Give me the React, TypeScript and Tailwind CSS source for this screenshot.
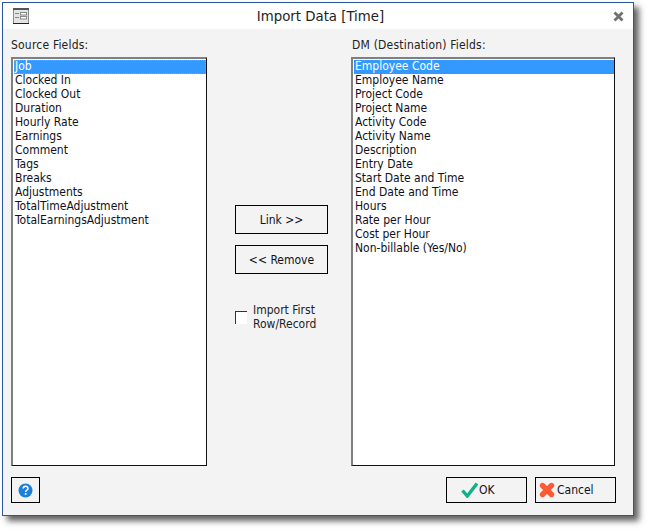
const sourceFields = [
  "Job",
  "Clocked In",
  "Clocked Out",
  "Duration",
  "Hourly Rate",
  "Earnings",
  "Comment",
  "Tags",
  "Breaks",
  "Adjustments",
  "TotalTimeAdjustment",
  "TotalEarningsAdjustment",
];

const destFields = [
  "Employee Code",
  "Employee Name",
  "Project Code",
  "Project Name",
  "Activity Code",
  "Activity Name",
  "Description",
  "Entry Date",
  "Start Date and Time",
  "End Date and Time",
  "Hours",
  "Rate per Hour",
  "Cost per Hour",
  "Non-billable (Yes/No)",
];

function ListBox({ items, width, focused }: { items: string[]; width: string; focused?: boolean }) {
  return (
    <div className={`${width} h-[409px] bg-white border border-[#101010] border-l-2 border-t-2 border-l-[#808080] border-t-[#808080] pl-px pt-px`}>
      {items.map((item, i) => (
        <div
          key={item}
          className={
            i === 0
              ? `h-[14px] leading-[13px] pl-[1px] bg-[#3399ff] text-white ${focused ? "outline outline-1 outline-dotted outline-offset-[-1px] outline-[#b89a70]" : ""}`
              : "h-[14px] leading-[13px] pl-[1px] text-[#101020]"
          }
        >
          {item}
        </div>
      ))}
    </div>
  );
}

export default function App() {
  return (
    <div className="w-[647px] h-[530px] bg-white pl-[2px] pt-[2px] font-['DejaVu_Sans_Condensed','DejaVu_Sans',sans-serif] text-[12px] text-[#101020]">
      <div className="w-[632px] h-[514px] border border-[#2b579a] bg-[#f3f3f3] flex flex-col shadow-[5px_5px_6px_rgba(60,60,60,0.8)]">
        <div className="h-[26px] bg-white flex items-center pl-[10px] pr-[9px] shrink-0">
          <svg width="16" height="16" viewBox="0 0 16 16">
            <rect x="0.5" y="0.5" width="15" height="15" fill="#e4e4e4" stroke="#8a8a8a" />
            <rect x="0" y="0" width="16" height="2" fill="#555" />
            <rect x="0" y="15" width="16" height="1" fill="#222" />
            <path d="M2 5.5h4M2 9.5h4" stroke="#888" />
            <rect x="7.5" y="4.5" width="6" height="2.5" fill="#fff" stroke="#888" />
            <rect x="7.5" y="8.5" width="6" height="2.5" fill="#fff" stroke="#888" />
          </svg>
          <div className="flex-1 text-center text-[14.8px] text-[#222] pr-[1px]">Import Data [Time]</div>
          <svg width="11" height="11" viewBox="0 0 11 11">
            <path d="M1.5 1.5l8 8M9.5 1.5l-8 8" stroke="#707070" strokeWidth="2.8" />
          </svg>
        </div>
        <div className="flex-1 flex flex-col pl-[8px] pr-[17px]">
          <div className="flex mt-[8px] h-[429px]">
            <div className="w-[196px]">
              <div className="h-[20px] leading-[16px] tracking-[0.2px] text-[#222]">Source Fields:</div>
              <ListBox items={sourceFields} width="w-[196px]" focused />
            </div>
            <div className="w-[145px] pl-[28px] pt-[168px]">
              <button className="block w-[93px] h-[29px] border border-black text-center">Link &gt;&gt;</button>
              <button className="block w-[93px] h-[29px] mt-[11px] border border-black text-center">&lt;&lt; Remove</button>
              <div className="flex items-center mt-[29px]">
                <div className="w-[12px] h-[13px] bg-white border-l border-t border-[#333] shrink-0" />
                <div className="ml-[6px] leading-[14px] text-[#222]">Import First Row/Record</div>
              </div>
            </div>
            <div className="w-[264px] -ml-px">
              <div className="h-[20px] pl-px leading-[16px] tracking-[0.2px] text-[#222]">DM (Destination) Fields:</div>
              <ListBox items={destFields} width="w-[264px]" />
            </div>
          </div>
          <div className="flex items-center mt-[11px]">
            <button className="w-[29px] h-[26px] border border-black flex items-center justify-center">
              <svg width="15" height="15" viewBox="0 0 15 15">
                <circle cx="7.5" cy="7.5" r="7" fill="#1e7fd6" />
                <path d="M5.2 5.6c0-3 4.8-3 4.8-.2 0 1.8-2.4 1.8-2.4 3.6" fill="none" stroke="#fff" strokeWidth="1.5" />
                <rect x="6.8" y="10" width="1.7" height="1.8" fill="#fff" />
              </svg>
            </button>
            <div className="flex-1" />
            <button className="w-[81px] h-[26px] border border-black flex items-center pl-[14px]">
              <svg width="18" height="16" viewBox="0 0 18 16">
                <path d="M1.5 8.5l4.8 5.5L16 1.5" fill="none" stroke="#10b08a" strokeWidth="3.4" />
              </svg>
              <span>OK</span>
            </button>
            <button className="w-[81px] h-[26px] ml-[8px] border border-black flex items-center pl-[3px]">
              <svg width="16" height="16" viewBox="0 0 16 16">
                <path d="M3.5 3.5l9 9M12.5 3.5l-9 9" stroke="#ff5a36" strokeWidth="5.4" strokeLinecap="round" />
              </svg>
              <span className="ml-[2px]">Cancel</span>
            </button>
          </div>
        </div>
      </div>
    </div>
  );
}
